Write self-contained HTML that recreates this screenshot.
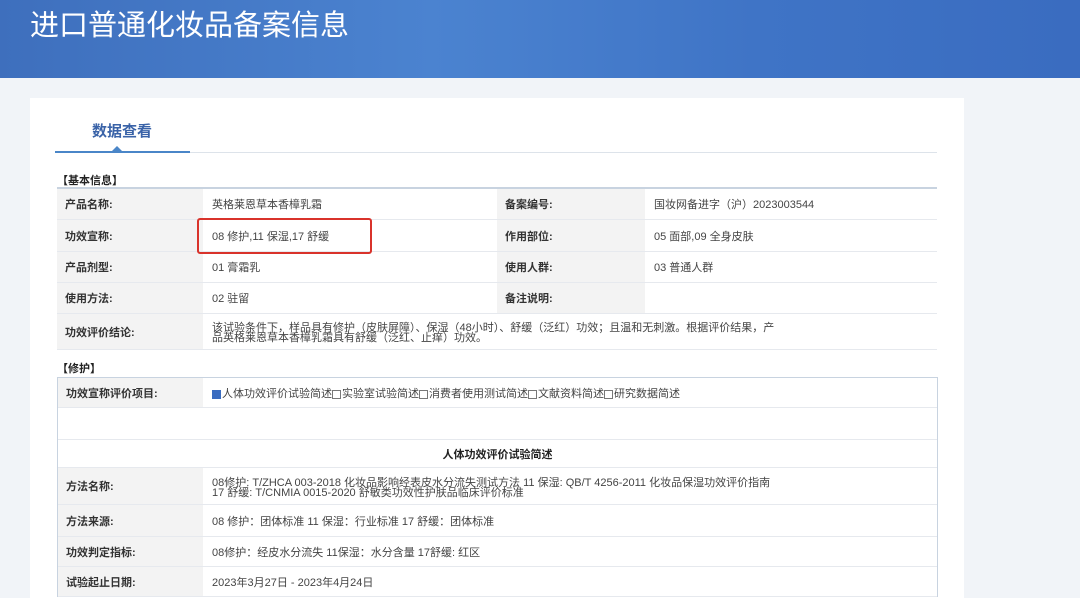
<!DOCTYPE html>
<html><head><meta charset="utf-8"><style>
*{margin:0;padding:0;box-sizing:border-box}
body{width:1080px;height:589px;overflow:hidden;background:#f1f4f8;font-family:"Liberation Sans","Noto Sans CJK SC",sans-serif;position:relative;color:#333}
.hdr{position:absolute;left:0;top:0;width:1080px;height:78px;background:linear-gradient(90deg,#3e6fbd 0%,#4b83d0 40%,#3f74c6 70%,#3a6cc0 100%)}
.hdr h1{position:absolute;left:30px;top:2px;font-size:29px;font-weight:normal;color:#fff}
.card{position:absolute;left:30px;top:98px;width:934px;height:500px;background:#fff}
.tab{position:absolute;left:92px;top:120px;font-size:15px;color:#3a63a8;font-weight:bold}
.tl{position:absolute;left:55px;top:152px;width:882px;height:1px;background:#dde3ea}
.tb{position:absolute;left:55px;top:151px;width:135px;height:2px;background:#4a86c8}
.tri{position:absolute;left:111px;top:146px;width:0;height:0;border-left:6px solid transparent;border-right:6px solid transparent;border-bottom:6px solid #4a86c8}
.sec{position:absolute;left:57px;font-size:11px;font-weight:bold;color:#222}
.c{position:absolute;font-size:11px;display:flex;align-items:center;padding-left:8px;padding-top:3px;border-bottom:1px solid #e6e9ee;line-height:11px}
.l{background:#f3f3f3;font-weight:bold;color:#333}
.v{background:#fff;color:#444;padding-left:9px}
.line{position:absolute;height:2px;background:#c8d3e0}
.box{position:absolute;left:197px;top:218px;width:175px;height:36px;border:2px solid #d9332b;border-radius:3px}
.chk{display:inline-block;width:9px;height:9px;border:1px solid #777;margin-right:1px;vertical-align:-1px}
.chk.on{background:#3a6cc0;border-color:#3a6cc0}
</style></head><body>
<div class="hdr"><h1>进口普通化妆品备案信息</h1></div>
<div class="card"></div>
<div class="tab">数据查看</div>
<div class="tl"></div><div class="tb"></div><div class="tri"></div>

<div class="sec" style="top:172px">【基本信息】</div>
<div class="line" style="left:57px;top:187px;width:880px"></div>
<div class="c l" style="left:57px;top:189px;width:146px;height:31px">产品名称:</div>
<div class="c v" style="left:203px;top:189px;width:294px;height:31px">英格莱恩草本香樟乳霜</div>
<div class="c l" style="left:497px;top:189px;width:148px;height:31px">备案编号:</div>
<div class="c v" style="left:645px;top:189px;width:292px;height:31px">国妆网备进字（沪）2023003544</div>

<div class="c l" style="left:57px;top:220px;width:146px;height:32px">功效宣称:</div>
<div class="c v" style="left:203px;top:220px;width:294px;height:32px">08 修护,11 保湿,17 舒缓</div>
<div class="c l" style="left:497px;top:220px;width:148px;height:32px">作用部位:</div>
<div class="c v" style="left:645px;top:220px;width:292px;height:32px">05 面部,09 全身皮肤</div>

<div class="c l" style="left:57px;top:252px;width:146px;height:31px">产品剂型:</div>
<div class="c v" style="left:203px;top:252px;width:294px;height:31px">01 膏霜乳</div>
<div class="c l" style="left:497px;top:252px;width:148px;height:31px">使用人群:</div>
<div class="c v" style="left:645px;top:252px;width:292px;height:31px">03 普通人群</div>

<div class="c l" style="left:57px;top:283px;width:146px;height:31px">使用方法:</div>
<div class="c v" style="left:203px;top:283px;width:294px;height:31px">02 驻留</div>
<div class="c l" style="left:497px;top:283px;width:148px;height:31px">备注说明:</div>
<div class="c v" style="left:645px;top:283px;width:292px;height:31px"></div>

<div class="c l" style="left:57px;top:314px;width:146px;height:36px">功效评价结论:</div>
<div class="c v" style="left:203px;top:314px;width:734px;height:36px;line-height:10px">该试验条件下，样品具有修护（皮肤屏障）、保湿（48小时）、舒缓（泛红）功效；且温和无刺激。根据评价结果，产<br>品英格莱恩草本香樟乳霜具有舒缓（泛红、止痒）功效。</div>
<div class="box"></div>

<div class="sec" style="top:360px">【修护】</div>
<div style="position:absolute;left:57px;top:377px;width:881px;height:220px;border:1px solid #c8d3e0;border-bottom:none"></div>
<div class="c l" style="left:58px;top:378px;width:145px;height:30px">功效宣称评价项目:</div>
<div class="c v" style="left:203px;top:378px;width:734px;height:30px;padding-left:9px"><span class="chk on"></span>人体功效评价试验简述<span class="chk"></span>实验室试验简述<span class="chk"></span>消费者使用测试简述<span class="chk"></span>文献资料简述<span class="chk"></span>研究数据简述</div>
<div class="c v" style="left:58px;top:408px;width:879px;height:32px"></div>
<div class="c v" style="left:58px;top:440px;width:879px;height:28px;justify-content:center;font-weight:bold;color:#222;padding-left:0">人体功效评价试验简述</div>
<div class="c l" style="left:58px;top:468px;width:145px;height:37px">方法名称:</div>
<div class="c v" style="left:203px;top:468px;width:734px;height:37px;line-height:10px">08修护: T/ZHCA 003-2018 化妆品影响经表皮水分流失测试方法 11 保湿: QB/T 4256-2011 化妆品保湿功效评价指南<br>17 舒缓: T/CNMIA 0015-2020 舒敏类功效性护肤品临床评价标准</div>
<div class="c l" style="left:58px;top:505px;width:145px;height:32px">方法来源:</div>
<div class="c v" style="left:203px;top:505px;width:734px;height:32px">08 修护：团体标准 11 保湿：行业标准 17 舒缓：团体标准</div>
<div class="c l" style="left:58px;top:537px;width:145px;height:30px">功效判定指标:</div>
<div class="c v" style="left:203px;top:537px;width:734px;height:30px">08修护：经皮水分流失 11保湿：水分含量 17舒缓: 红区</div>
<div class="c l" style="left:58px;top:567px;width:145px;height:30px">试验起止日期:</div>
<div class="c v" style="left:203px;top:567px;width:734px;height:30px">2023年3月27日 - 2023年4月24日</div>
</body></html>
